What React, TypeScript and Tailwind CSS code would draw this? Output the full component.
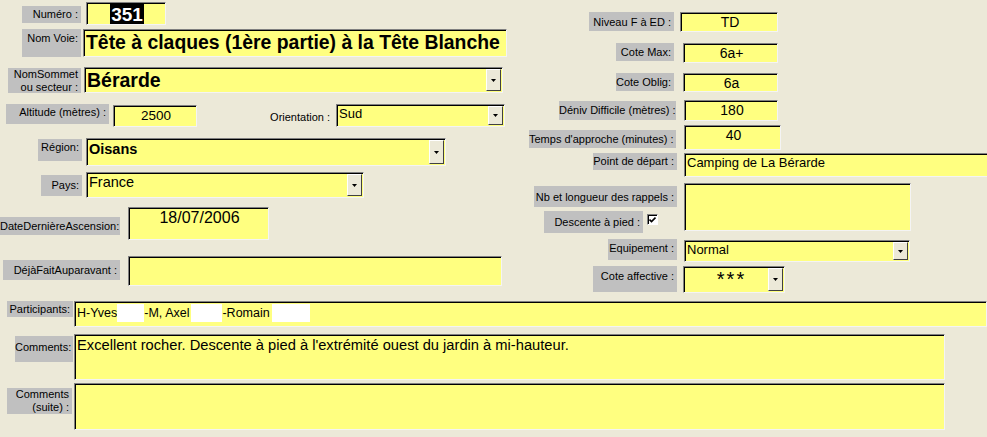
import React from "react";
import clsx from "clsx";

const Lbl = ({
  className,
  children,
}: {
  className?: string;
  children: React.ReactNode;
}) => (
  <div
    className={clsx(
      "shrink-0 bg-[#c0c0c0] text-right text-[11px] leading-[13px] pr-[3px] text-black whitespace-nowrap",
      className
    )}
  >
    {children}
  </div>
);

const ComboBtn = () => (
  <div className="shrink-0 w-[15px] m-[1px] bg-[#ece9d8] border border-t-white border-l-white border-b-[#404040] border-r-[#404040] flex items-center justify-center">
    <svg width="5" height="3" viewBox="0 0 5 3">
      <path d="M0 0h5L2.5 3z" fill="#000" />
    </svg>
  </div>
);

const Field = ({
  className,
  inner,
  children,
  combo,
}: {
  className?: string;
  inner?: string;
  children?: React.ReactNode;
  combo?: boolean;
}) => (
  <div
    className={clsx(
      "shrink-0 flex bg-[#ffff80] border border-t-[#808080] border-l-[#808080] border-b-[#f4f4f4] border-r-[#f4f4f4] shadow-[inset_1px_1px_0_#000]",
      className
    )}
  >
    <div
      className={clsx(
        "flex-1 min-w-0 overflow-hidden whitespace-nowrap text-black pl-[2px]",
        inner
      )}
    >
      {children}
    </div>
    {combo && <ComboBtn />}
  </div>
);

const Blank = ({ className }: { className: string }) => (
  <span className={clsx("inline-block h-[18px] bg-white align-top", className)} />
);

export default function App() {
  return (
    <div className="w-[987px] h-[437px] overflow-hidden bg-[#ece9d8] font-['Liberation_Sans',Arial,sans-serif]">
      {/* top part: two columns */}
      <div className="flex h-[301px]">
        {/* left column */}
        <div className="w-[520px] shrink-0 pt-[2px]">
          <div className="flex items-start h-[26px]">
            <Lbl className="ml-[22px] w-[59px] h-[17px] mt-[4px] pt-[2px]">Numéro :</Lbl>
            <Field className="ml-[5px] w-[80px] h-[23px]" inner="text-center pl-0 pt-[1px]">
              <span className="bg-black text-white font-bold text-[19px] leading-[20px] px-[1px]">351</span>
            </Field>
          </div>
          <div className="flex items-start h-[39px]">
            <Lbl className="ml-[22px] w-[59px] h-[28px] mt-[1px] pt-[3px]">Nom Voie:</Lbl>
            <Field className="ml-[2px] w-[424px] h-[28px] mt-[1px]" inner="font-bold text-[19.4px] leading-[25px]">
              Tête à claques (1ère partie) à la Tête Blanche
            </Field>
          </div>
          <div className="flex items-start h-[37px]">
            <Lbl className="ml-[8px] w-[73px] h-[25px] mt-[1px] pt-0 leading-[12px]">
              NomSommet
              <br />
              ou secteur :
            </Lbl>
            <Field combo className="ml-[3px] w-[419px] h-[26px]" inner="font-bold text-[19.5px] leading-[24px]">
              Bérarde
            </Field>
          </div>
          <div className="flex items-start h-[34px]">
            <Lbl className="ml-[6px] w-[103px] h-[20px] pt-[2px]">Altitude (mètres) :</Lbl>
            <Field className="ml-[4px] w-[84px] h-[22px] mt-[1px]" inner="text-center pl-0 text-[13.5px] leading-[20px]">
              2500
            </Field>
            <div className="w-[136px] shrink-0 text-right pr-[3px] text-[11px] leading-[13px] mt-[7px]">Orientation :</div>
            <Field combo className="ml-[3px] w-[169px] h-[23px]" inner="text-[13px] leading-[17px]">
              Sud
            </Field>
          </div>
          <div className="flex items-start h-[34px]">
            <Lbl className="ml-[38px] w-[44px] h-[22px] mt-[1px] pt-[2px]">Région:</Lbl>
            <Field combo className="ml-[4px] w-[360px] h-[28px]" inner="font-bold text-[14.5px] leading-[18px] pt-[1px]">
              Oisans
            </Field>
          </div>
          <div className="flex items-start h-[35px]">
            <Lbl className="ml-[41px] w-[41px] h-[21px] mt-[3px] pt-[4px]">Pays:</Lbl>
            <Field combo className="ml-[4px] w-[278px] h-[26px]" inner="text-[14.5px] leading-[18px]">
              France
            </Field>
          </div>
          <div className="flex items-start h-[49px]">
            <Lbl className="ml-0 w-[120px] h-[18px] mt-[10px] pt-[3px]">DateDernièreAscension:</Lbl>
            <Field className="ml-[8px] w-[141px] h-[33px]" inner="text-center pl-0 text-[16px] leading-[20px]">
              18/07/2006
            </Field>
          </div>
          <div className="flex items-start">
            <Lbl className="ml-[3px] w-[117px] h-[20px] mt-[4px] pt-[4px]">DéjàFaitAuparavant :</Lbl>
            <Field className="ml-[8px] w-[374px] h-[30px]" />
          </div>
        </div>

        {/* right column */}
        <div className="flex-1 pt-[12px]">
          <div className="flex items-start h-[31px]">
            <Lbl className="ml-[69px] w-[85px] h-[19px] pt-[4px]">Niveau F à ED :</Lbl>
            <Field className="ml-[6px] w-[98px] h-[20px]" inner="text-center pl-0 text-[14px] leading-[18px]">
              TD
            </Field>
          </div>
          <div className="flex items-start h-[30px]">
            <Lbl className="ml-[96px] w-[58px] h-[18px] pt-[3px]">Cote Max:</Lbl>
            <Field className="ml-[9px] w-[95px] h-[20px]" inner="text-center pl-0 text-[14px] leading-[18px]">
              6a+
            </Field>
          </div>
          <div className="flex items-start h-[27px]">
            <Lbl className="ml-[96px] w-[58px] h-[18px] pt-[3px]">Cote Oblig:</Lbl>
            <Field className="ml-[9px] w-[95px] h-[19px]" inner="text-center pl-0 text-[14px] leading-[18px]">
              6a
            </Field>
          </div>
          <div className="flex items-start h-[25px]">
            <Lbl className="ml-[39px] w-[117px] h-[19px] mt-[1px] pt-[3px]">Déniv Difficile (mètres) :</Lbl>
            <Field className="ml-[8px] w-[94px] h-[21px]" inner="text-center pl-0 text-[14px] leading-[18px]">
              180
            </Field>
          </div>
          <div className="flex items-start h-[28px]">
            <Lbl className="ml-[9px] w-[147px] h-[18px] mt-[5px] pt-[3px]">Temps d'approche (minutes) :</Lbl>
            <Field className="ml-[8px] w-[97px] h-[25px]" inner="text-center pl-0 text-[14px] leading-[18px]">
              40
            </Field>
          </div>
          <div className="flex items-start h-[30px]">
            <Lbl className="ml-[73px] w-[84px] h-[17px] pt-[2px]">Point de départ :</Lbl>
            <Field className="ml-[7px] w-[320px] h-[24px]" inner="text-[13px] leading-[18px]">
              Camping de La Bérarde
            </Field>
          </div>
          <div className="flex items-start h-[56px]">
            <div className="w-[157px] shrink-0">
              <Lbl className="ml-[14px] w-[143px] h-[21px] mt-[3px] pt-[5px]">Nb et longueur des rappels :</Lbl>
              <div className="flex items-start mt-[4px]">
                <Lbl className="ml-[24px] w-[99px] h-[22px] pt-[5px]">Descente à pied :</Lbl>
                <div className="ml-[4px] mt-[3px] w-[11px] h-[11px] bg-white border border-t-[#808080] border-l-[#808080] border-b-white border-r-white shadow-[inset_1px_1px_0_#000] flex items-center justify-center">
                  <svg width="7" height="7" viewBox="0 0 7 7">
                    <path d="M0.5 3.5L2.5 5.5L6.5 1.5" stroke="#000" strokeWidth="1.6" fill="none" />
                  </svg>
                </div>
              </div>
            </div>
            <Field className="ml-[7px] w-[227px] h-[48px]" />
          </div>
          <div className="flex items-start h-[27px]">
            <Lbl className="ml-[88px] w-[69px] h-[21px] pt-[3px]">Equipement :</Lbl>
            <Field combo className="ml-[7px] w-[226px] h-[22px] mt-[1px]" inner="text-[13px] leading-[18px]">
              Normal
            </Field>
          </div>
          <div className="flex items-start">
            <Lbl className="ml-[73px] w-[84px] h-[26px] pt-[4px]">Cote affective :</Lbl>
            <Field combo className="ml-[6px] w-[102px] h-[27px]" inner="text-center pl-[12px] pt-[1px] text-[20px] leading-[23px] tracking-[2px]">
              ***
            </Field>
          </div>
        </div>
      </div>

      {/* bottom rows */}
      <div className="flex items-start h-[33px]">
        <Lbl className="ml-[7px] w-[66px] h-[16px] pt-[2px]">Participants:</Lbl>
        <Field className="ml-[1px] w-[913px] h-[26px]" inner="text-[12.5px] leading-[18px] pt-[2px]">
          H-Yves
          <Blank className="w-[27px]" />
          -M, Axel
          <Blank className="w-[31px] ml-[2px]" />
          -Romain
          <Blank className="w-[38px] ml-[2px]" />
        </Field>
      </div>
      <div className="flex items-start h-[49px]">
        <Lbl className="ml-[15px] w-[58px] h-[26px] mt-[2px] pt-[5px]">Comments:</Lbl>
        <Field className="ml-[1px] w-[871px] h-[46px]" inner="text-[14.7px] leading-[18px] pt-[1px]">
          Excellent rocher. Descente à pied à l'extrémité ouest du jardin à mi-hauteur.
        </Field>
      </div>
      <div className="flex items-start">
        <Lbl className="ml-[7px] w-[65px] h-[26px] mt-[5px] pt-0 leading-[12px]">
          Comments
          <br />
          (suite) :
        </Lbl>
        <Field className="ml-[2px] w-[871px] h-[47px]" />
      </div>
    </div>
  );
}
